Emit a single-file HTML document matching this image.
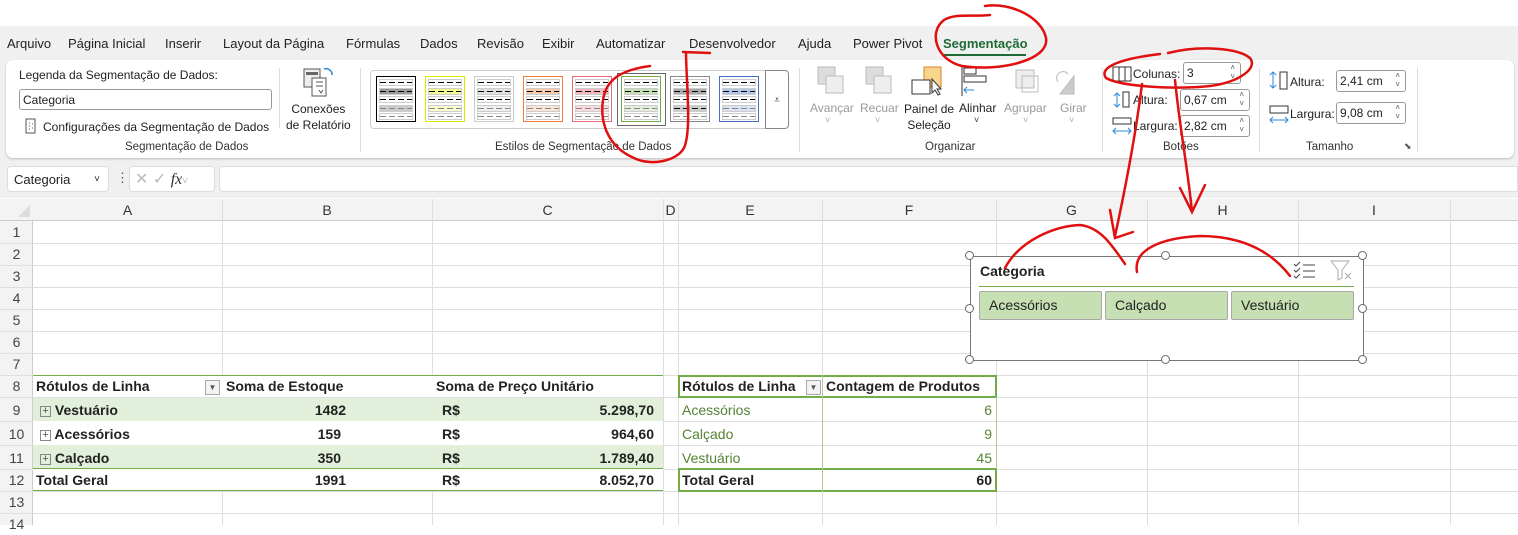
<!DOCTYPE html>
<html><head><meta charset="utf-8"><style>
*{box-sizing:border-box;margin:0;padding:0}
body{width:1518px;height:525px;overflow:hidden;background:#fff;font-family:"Liberation Sans",sans-serif;position:relative;color:#222}
.a{position:absolute;white-space:nowrap}
.tab{top:36px;font-size:13px;color:#222}
.gl{font-size:11.5px;color:#333;top:141px}
.sw{position:absolute;top:76px;width:40px;height:46px;border:1px solid;background:#fff;padding:2px}
.sw div{height:7px;margin-bottom:1.5px;border:1px solid #ccc;background-image:repeating-linear-gradient(90deg,#000 0 6px,transparent 6px 9px);background-size:100% 1px;background-repeat:repeat-x;background-position:0 50%}
.sw div.g{background-image:repeating-linear-gradient(90deg,#888 0 6px,transparent 6px 9px)}
.sp{position:absolute;border:1px solid #999;border-radius:3px;height:22px;background:#fff;font-size:12px;padding:3px 3px;color:#222}
.sp:after{content:"˄\A˅";white-space:pre;position:absolute;right:5px;top:0;font-size:8px;line-height:9px;color:#555}
.cell{position:absolute;font-size:14px;height:22px;line-height:22px}
.hl{position:absolute;left:0;width:1518px;height:1px;background:#dedede}
.vl{position:absolute;top:199px;width:1px;height:326px;background:#dedede}
.ch{position:absolute;top:199px;height:22px;line-height:22px;text-align:center;font-size:14px;color:#333}
.rn{position:absolute;left:0;width:33px;text-align:center;font-size:14px;color:#444;height:22px;line-height:22px}
b{font-weight:bold}
.h{position:absolute;width:9px;height:9px;border:1.5px solid #666;border-radius:50%;background:#fff}
.btn{position:absolute;top:291px;height:29px;width:123px;background:#c6e0b4;border:1px solid #a8a8a8;border-radius:2px;font-size:14px;line-height:27px;padding-left:9px}
.pl{font-size:11px;border:1px solid #888;color:#555;line-height:9px;display:inline-block;width:11px;height:11px;text-align:center;vertical-align:middle}
</style></head><body>
<div class="a" style="left:0;top:26px;width:1518px;height:32px;background:#f0f0f0"></div>
<div class="a" style="left:0;top:58px;width:1518px;height:140px;background:#f0f0f0"></div>
<div class="a tab" style="left:7px">Arquivo</div>
<div class="a tab" style="left:68px">Página Inicial</div>
<div class="a tab" style="left:165px">Inserir</div>
<div class="a tab" style="left:223px">Layout da Página</div>
<div class="a tab" style="left:346px">Fórmulas</div>
<div class="a tab" style="left:420px">Dados</div>
<div class="a tab" style="left:477px">Revisão</div>
<div class="a tab" style="left:542px">Exibir</div>
<div class="a tab" style="left:596px">Automatizar</div>
<div class="a tab" style="left:689px">Desenvolvedor</div>
<div class="a tab" style="left:798px">Ajuda</div>
<div class="a tab" style="left:853px">Power Pivot</div>
<div class="a tab" style="left:943px;color:#1e6b35;font-weight:bold">Segmentação</div>
<div class="a" style="left:943px;top:54px;width:83px;height:2px;background:#1e6b35"></div>
<div class="a" style="left:6px;top:60px;width:1508px;height:98px;background:#fff;border-radius:7px;box-shadow:0 1px 2px #bbb"></div>
<div class="a" style="left:19px;top:68px;font-size:12px">Legenda da Segmentação de Dados:</div>
<div class="a" style="left:19px;top:89px;width:253px;height:21px;border:1px solid #999;border-radius:3px;font-size:12px;padding:3px 3px">Categoria</div>
<svg class="a" style="left:25px;top:118px" width="12" height="16"><rect x="1" y="1" width="9" height="14" fill="none" stroke="#555"/><path d="M4 5h1M4 8h1M4 11h1M7 6h1M7 10h1" stroke="#555"/></svg>
<div class="a" style="left:43px;top:120px;font-size:12px">Configurações da Segmentação de Dados</div>
<div class="a" style="left:279px;top:68px;width:1px;height:60px;background:#ddd"></div>
<div class="a" style="left:360px;top:68px;width:1px;height:84px;background:#ddd"></div>
<div class="a" style="left:799px;top:68px;width:1px;height:84px;background:#ddd"></div>
<div class="a" style="left:1102px;top:68px;width:1px;height:84px;background:#ddd"></div>
<div class="a" style="left:1259px;top:68px;width:1px;height:84px;background:#ddd"></div>
<div class="a" style="left:1417px;top:68px;width:1px;height:84px;background:#ddd"></div>
<svg class="a" style="left:302px;top:66px" width="34" height="32"><rect x="2" y="3" width="16" height="18" fill="#eee" stroke="#555"/><rect x="4" y="6" width="12" height="3" fill="#666"/><rect x="10" y="12" width="14" height="18" fill="#fff" stroke="#555"/><path d="M14 16h7M14 20h7M17 24l2 3 2-3" stroke="#555" fill="none"/><path d="M22 3a6 6 0 0 1 8 6" stroke="#2b88d8" fill="none" stroke-width="1.5"/></svg>
<div class="a" style="left:286px;top:101px;font-size:12px;text-align:center;line-height:16px">Conexões<br>de Relatório</div>
<div class="a gl" style="left:125px">Segmentação de Dados</div>
<div class="a" style="left:370px;top:70px;width:418px;height:59px;border:1px solid #ccc;border-radius:4px"></div>
<div class="a" style="left:765px;top:70px;width:24px;height:59px;border:1px solid #888;border-radius:0 4px 4px 0;font-size:10px;text-align:center;line-height:59px;background:#fff">⩡</div>
<div class="sw" style="left:376px;border-color:#000"><div></div><div style="background-color:#999"></div><div></div><div class="g" style="background-color:#ccc"></div><div class="g"></div></div>
<div class="sw" style="left:425px;border-color:#dde800"><div></div><div style="background-color:#f3ff8f"></div><div></div><div class="g" style="background-color:#fbffd0"></div><div class="g"></div></div>
<div class="sw" style="left:474px;border-color:#ccc"><div></div><div style="background-color:#e0e0e0"></div><div></div><div class="g" style="background-color:#f0f0f0"></div><div class="g"></div></div>
<div class="sw" style="left:523px;border-color:#f57a3a"><div></div><div style="background-color:#f8cbad"></div><div></div><div class="g" style="background-color:#fce4d6"></div><div class="g"></div></div>
<div class="sw" style="left:572px;border-color:#ec6a78"><div></div><div style="background-color:#f5b8c0"></div><div></div><div class="g" style="background-color:#fadadd"></div><div class="g"></div></div>
<div class="a" style="left:617px;top:73px;width:49px;height:53px;border:1px solid #666"></div>
<div class="sw" style="left:621px;border-color:#70ad47"><div></div><div style="background-color:#c6e0b4"></div><div></div><div class="g" style="background-color:#e2efda"></div><div class="g"></div></div>
<div class="sw" style="left:670px;border-color:#888"><div></div><div style="background-color:#aaa"></div><div></div><div style="background-color:#ccc"></div><div class="g"></div></div>
<div class="sw" style="left:719px;border-color:#4472c4"><div></div><div style="background-color:#b4c6e7"></div><div></div><div class="g" style="background-color:#dae3f3"></div><div class="g"></div></div>
<div class="a gl" style="left:495px">Estilos de Segmentação de Dados</div>
<svg class="a" style="left:812px;top:64px" width="280" height="34">
<rect x="6" y="3" width="17" height="17" fill="#ddd" stroke="#bbb"/><rect x="14" y="12" width="17" height="17" fill="#eee" stroke="#bbb"/>
<rect x="54" y="3" width="17" height="17" fill="#ddd" stroke="#bbb"/><rect x="62" y="12" width="17" height="17" fill="#eee" stroke="#bbb"/>
<rect x="112" y="3" width="17" height="20" fill="#f8d58a" stroke="#d9822b"/><rect x="100" y="16" width="18" height="14" fill="#fff" stroke="#333"/><path d="M120 15l0 14 3-3 3 5 2-1-3-5 4 0z" fill="#fff" stroke="#333"/>
<path d="M150 2v30" stroke="#333"/><rect x="152" y="4" width="12" height="6" fill="#fff" stroke="#333"/><rect x="152" y="12" width="22" height="6" fill="#fff" stroke="#333"/><path d="M162 26h-10m3-3l-3 3 3 3" stroke="#2b88d8" fill="none"/>
<rect x="204" y="6" width="18" height="18" fill="#eee" stroke="#bbb"/><rect x="210" y="12" width="16" height="16" fill="none" stroke="#bbb"/>
<path d="M248 30l14-18v18z" fill="#ccc" stroke="#bbb"/><path d="M246 18a6 6 0 0 1 10-8" stroke="#bbb" fill="none"/>
</svg>
<div class="a" style="left:810px;top:101px;font-size:12px;color:#999">Avançar</div>
<div class="a" style="left:860px;top:101px;font-size:12px;color:#999">Recuar</div>
<div class="a" style="left:904px;top:101px;font-size:12px;text-align:center;line-height:16px">Painel de<br>Seleção</div>
<div class="a" style="left:959px;top:101px;font-size:12px">Alinhar</div>
<div class="a" style="left:1004px;top:101px;font-size:12px;color:#999">Agrupar</div>
<div class="a" style="left:1060px;top:101px;font-size:12px;color:#999">Girar</div>
<div class="a" style="left:825px;top:115px;font-size:9px;color:#aaa">˅</div><div class="a" style="left:875px;top:115px;font-size:9px;color:#aaa">˅</div>
<div class="a" style="left:974px;top:115px;font-size:9px;color:#333">˅</div><div class="a" style="left:1023px;top:115px;font-size:9px;color:#aaa">˅</div><div class="a" style="left:1069px;top:115px;font-size:9px;color:#aaa">˅</div>
<div class="a gl" style="left:925px">Organizar</div>
<svg class="a" style="left:1111px;top:64px" width="26" height="72"><path d="M2 3h18v14H2zM8 3v14M14 3v14" stroke="#333" fill="none"/><path d="M6 29v14M3 32l3-3 3 3M3 40l3 3 3-3" stroke="#2b88d8" fill="none"/><rect x="12" y="28" width="6" height="15" fill="none" stroke="#333"/><rect x="2" y="54" width="18" height="6" fill="none" stroke="#333"/><path d="M2 67h18M5 64l-3 3 3 3M17 64l3 3-3 3" stroke="#2b88d8" fill="none"/></svg>
<div class="a" style="left:1133px;top:67px;font-size:12px">Colunas:</div>
<div class="a" style="left:1133px;top:93px;font-size:12px">Altura:</div>
<div class="a" style="left:1133px;top:119px;font-size:12px">Largura:</div>
<div class="sp" style="left:1183px;top:62px;width:58px;color:#222">3</div>
<div class="sp" style="left:1180px;top:89px;width:70px">0,67 cm</div>
<div class="sp" style="left:1180px;top:115px;width:70px">2,82 cm</div>
<div class="a gl" style="left:1163px">Botões</div>
<svg class="a" style="left:1268px;top:70px" width="24" height="56"><path d="M5 2v16M2 5l3-3 3 3M2 15l3 3 3-3" stroke="#2b88d8" fill="none"/><rect x="12" y="2" width="7" height="17" fill="none" stroke="#333"/><rect x="2" y="36" width="18" height="7" fill="none" stroke="#333"/><path d="M2 50h18M5 47l-3 3 3 3M17 47l3 3-3 3" stroke="#2b88d8" fill="none"/></svg>
<div class="a" style="left:1290px;top:75px;font-size:12px">Altura:</div>
<div class="a" style="left:1290px;top:107px;font-size:12px">Largura:</div>
<div class="sp" style="left:1336px;top:70px;width:70px">2,41 cm</div>
<div class="sp" style="left:1336px;top:102px;width:70px">9,08 cm</div>
<div class="a gl" style="left:1306px">Tamanho</div>
<div class="a" style="left:1404px;top:141px;font-size:9px;color:#555">⬊</div>
<div class="a" style="left:7px;top:166px;width:102px;height:26px;background:#fff;border:1px solid #ddd;border-radius:4px;font-size:13px;padding:5px 6px">Categoria<span style="position:absolute;right:8px;font-size:10px;top:7px">˅</span></div>
<div class="a" style="left:116px;top:170px;font-size:13px;color:#555">⋮</div>
<div class="a" style="left:129px;top:166px;width:86px;height:26px;background:#fff;border:1px solid #ddd;border-radius:4px;font-size:16px;color:#bbb;padding:2px 5px">✕ ✓ <i style="font-family:'Liberation Serif',serif;color:#333">fx</i><span style="font-size:10px">˅</span></div>
<div class="a" style="left:219px;top:166px;width:1299px;height:26px;background:#fff;border:1px solid #ddd;border-radius:4px 0 0 4px"></div>
<div class="a" style="left:0;top:199px;width:1518px;height:22px;background:#f3f3f3;border-bottom:1px solid #ccc"></div>
<div class="a" style="left:0;top:221px;width:33px;height:304px;background:#f3f3f3;border-right:1px solid #ccc"></div>
<svg class="a" style="left:18px;top:205px" width="13" height="13"><path d="M12 0v12H0z" fill="#ddd"/></svg>
<div class="hl" style="top:243px"></div><div class="hl" style="top:265px"></div><div class="hl" style="top:287px"></div><div class="hl" style="top:309px"></div><div class="hl" style="top:331px"></div><div class="hl" style="top:353px"></div><div class="hl" style="top:375px"></div><div class="hl" style="top:397px"></div><div class="hl" style="top:421px"></div><div class="hl" style="top:445px"></div><div class="hl" style="top:469px"></div><div class="hl" style="top:491px"></div><div class="hl" style="top:513px"></div>
<div class="vl" style="left:222px"></div><div class="vl" style="left:432px"></div><div class="vl" style="left:663px"></div><div class="vl" style="left:678px"></div><div class="vl" style="left:822px"></div><div class="vl" style="left:996px"></div><div class="vl" style="left:1147px"></div><div class="vl" style="left:1298px"></div><div class="vl" style="left:1450px"></div>
<div class="ch" style="left:33px;width:189px">A</div><div class="ch" style="left:222px;width:210px">B</div><div class="ch" style="left:432px;width:231px">C</div><div class="ch" style="left:663px;width:15px">D</div><div class="ch" style="left:678px;width:144px">E</div><div class="ch" style="left:822px;width:174px">F</div><div class="ch" style="left:996px;width:151px">G</div><div class="ch" style="left:1147px;width:151px">H</div><div class="ch" style="left:1298px;width:152px">I</div>
<div class="rn" style="top:221px">1</div><div class="rn" style="top:243px">2</div><div class="rn" style="top:265px">3</div><div class="rn" style="top:287px">4</div><div class="rn" style="top:309px">5</div><div class="rn" style="top:331px">6</div><div class="rn" style="top:353px">7</div><div class="rn" style="top:375px">8</div><div class="rn" style="top:399px">9</div><div class="rn" style="top:423px">10</div><div class="rn" style="top:447px">11</div><div class="rn" style="top:469px">12</div><div class="rn" style="top:491px">13</div><div class="rn" style="top:513px">14</div>
<div class="a" style="left:33px;top:375px;width:630px;height:22px;background:#fff;border-top:1px solid #70ad47"></div>
<div class="a" style="left:33px;top:398px;width:630px;height:23px;background:#e2efda"></div>
<div class="a" style="left:33px;top:421px;width:630px;height:24px;background:#fff"></div>
<div class="a" style="left:33px;top:445px;width:630px;height:24px;background:#e2efda"></div>
<div class="a" style="left:33px;top:468px;width:630px;height:23px;background:#fff;border-top:1px solid #70ad47;border-bottom:1px solid #70ad47"></div>
<div class="cell" style="left:36px;top:375px"><b>Rótulos de Linha</b></div>
<div class="a" style="left:205px;top:380px;width:15px;height:15px;border:1px solid #aaa;background:#f3f3f3;font-size:8px;text-align:center;line-height:14px;color:#555">▼</div>
<div class="cell" style="left:226px;top:375px"><b>Soma de Estoque</b></div>
<div class="cell" style="left:436px;top:375px"><b>Soma de Preço Unitário</b></div>
<div class="cell" style="left:40px;top:399px"><span class="pl">+</span><b> Vestuário</b></div>
<div class="cell" style="left:40px;top:423px"><span class="pl">+</span><b> Acessórios</b></div>
<div class="cell" style="left:40px;top:447px"><span class="pl">+</span><b> Calçado</b></div>
<div class="cell" style="left:36px;top:469px"><b>Total Geral</b></div>
<div class="cell" style="left:222px;width:124px;text-align:right;top:399px"><b>1482</b></div>
<div class="cell" style="left:222px;width:119px;text-align:right;top:423px"><b>159</b></div>
<div class="cell" style="left:222px;width:119px;text-align:right;top:447px"><b>350</b></div>
<div class="cell" style="left:222px;width:124px;text-align:right;top:469px"><b>1991</b></div>
<div class="cell" style="left:442px;top:399px"><b>R$</b></div><div class="cell" style="left:442px;top:423px"><b>R$</b></div><div class="cell" style="left:442px;top:447px"><b>R$</b></div><div class="cell" style="left:442px;top:469px"><b>R$</b></div>
<div class="cell" style="left:500px;width:154px;text-align:right;top:399px"><b>5.298,70</b></div>
<div class="cell" style="left:500px;width:154px;text-align:right;top:423px"><b>964,60</b></div>
<div class="cell" style="left:500px;width:154px;text-align:right;top:447px"><b>1.789,40</b></div>
<div class="cell" style="left:500px;width:154px;text-align:right;top:469px"><b>8.052,70</b></div>
<div class="a" style="left:678px;top:375px;width:319px;height:23px;border:2px solid #70ad47;background:#fff"></div>
<div class="a" style="left:678px;top:468px;width:319px;height:24px;border:2px solid #70ad47;background:#fff"></div>
<div class="a" style="left:822px;top:375px;width:1px;height:117px;background:#a9d08e"></div>
<div class="a" style="left:996px;top:397px;width:1px;height:72px;background:#a9d08e"></div>
<div class="cell" style="left:682px;top:375px"><b>Rótulos de Linha</b></div>
<div class="a" style="left:806px;top:380px;width:15px;height:15px;border:1px solid #aaa;background:#f3f3f3;font-size:8px;text-align:center;line-height:14px;color:#555">▼</div>
<div class="cell" style="left:826px;top:375px"><b>Contagem de Produtos</b></div>
<div class="cell" style="left:682px;top:399px;color:#548235">Acessórios</div>
<div class="cell" style="left:682px;top:423px;color:#548235">Calçado</div>
<div class="cell" style="left:682px;top:447px;color:#548235">Vestuário</div>
<div class="cell" style="left:822px;width:170px;text-align:right;top:399px;color:#548235">6</div>
<div class="cell" style="left:822px;width:170px;text-align:right;top:423px;color:#548235">9</div>
<div class="cell" style="left:822px;width:170px;text-align:right;top:447px;color:#548235">45</div>
<div class="cell" style="left:682px;top:469px"><b>Total Geral</b></div>
<div class="cell" style="left:822px;width:170px;text-align:right;top:469px"><b>60</b></div>
<div class="a" style="left:970px;top:256px;width:394px;height:105px;background:#fff;border:1px solid #777"></div>
<div class="a" style="left:980px;top:263px;font-size:14px"><b>Categoria</b></div>
<div class="a" style="left:979px;top:286px;width:375px;height:1px;background:#70ad47"></div>
<svg class="a" style="left:1293px;top:261px" width="24" height="20" fill="none" stroke="#444"><path d="M1 3l2 2 4-4M1 9l2 2 4-4M1 15l2 2 4-4M10 4h12M10 10h12M10 16h12"/></svg>
<svg class="a" style="left:1330px;top:260px" width="24" height="22"><path d="M1 1h18l-7 9v8l-4 2V10z" fill="none" stroke="#aaa"/><path d="M15 13l6 6M21 13l-6 6" stroke="#aaa"/></svg>
<div class="btn" style="left:979px">Acessórios</div>
<div class="btn" style="left:1105px">Calçado</div>
<div class="btn" style="left:1231px">Vestuário</div>
<div class="h" style="left:965px;top:251px"></div><div class="h" style="left:1161px;top:251px"></div><div class="h" style="left:1358px;top:251px"></div>
<div class="h" style="left:965px;top:304px"></div><div class="h" style="left:1358px;top:304px"></div>
<div class="h" style="left:965px;top:355px"></div><div class="h" style="left:1161px;top:355px"></div><div class="h" style="left:1358px;top:355px"></div>
<svg class="a" style="left:0;top:0" width="1518" height="525" fill="none" stroke="#e01010" stroke-width="2.5" stroke-linecap="round">
<path d="M985,6 C1012,2 1042,18 1046,38 C1050,60 1000,72 962,66 C936,60 928,32 944,20 C955,13 972,17 990,15"/>
<path d="M710,53 L683,52 M686,52 C686,80 692,130 684,148 C676,162 650,166 634,158 C606,146 600,120 603,100 C606,80 620,70 650,66"/>
<path d="M1168,53 C1200,45 1238,48 1250,58 C1258,68 1240,82 1210,86 C1170,90 1120,86 1106,78 C1100,70 1110,60 1160,54"/>
<path d="M1142,84 C1135,140 1125,190 1115,236 M1110,210 L1115,238 L1133,232"/>
<path d="M1175,80 C1180,130 1188,170 1192,212 M1180,188 L1192,212 L1205,185"/>
<path d="M1005,268 C1020,240 1055,226 1080,225 C1100,227 1112,245 1125,264"/>
<path d="M1137,272 C1133,250 1160,238 1200,236 C1240,236 1270,250 1290,276"/>
</svg>
</body></html>
